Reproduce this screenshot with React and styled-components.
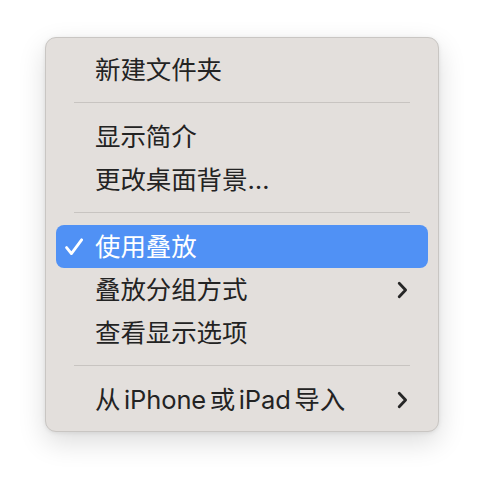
import styled, { createGlobalStyle } from 'styled-components'

const GlobalStyle = createGlobalStyle`
  html, body {
    margin: 0;
    padding: 0;
    background: #ffffff;
  }
  body {
    font-family: Inter, "Noto Sans CJK SC", sans-serif;
  }
`

const sections = [
  [{ label: '新建文件夹' }],
  [{ label: '显示简介' }, { label: '更改桌面背景…' }],
  [
    { label: '使用叠放', checked: true, active: true },
    { label: '叠放分组方式', submenu: true },
    { label: '查看显示选项' }
  ],
  [{ label: '从 iPhone 或 iPad 导入', submenu: true }]
]

function Check() {
  return (
    <svg width="18" height="18" viewBox="0 0 18 18" fill="none">
      <path
        d="M1.6 9.6 L6.4 15.6 L16.6 1.8"
        stroke="#fff"
        strokeWidth="2.8"
        strokeLinecap="round"
        strokeLinejoin="round"
      />
    </svg>
  )
}

function Chevron() {
  return (
    <svg width="11" height="18" viewBox="0 0 11 18" fill="none">
      <path
        d="M2.2 2.2 L8.6 9 L2.2 15.8"
        stroke="#262626"
        strokeWidth="2.8"
        strokeLinecap="round"
        strokeLinejoin="round"
      />
    </svg>
  )
}

export default function App() {
  return (
    <Page>
      <GlobalStyle />
      <Menu>
        {sections.map((items, i) => (
          <Section key={i}>
            {i > 0 && <Separator />}
            {items.map((item) => (
              <Row key={item.label} $active={item.active}>
                <CheckSlot>{item.checked && <Check />}</CheckSlot>
                <Label>{item.label}</Label>
                {item.submenu && <Chevron />}
              </Row>
            ))}
          </Section>
        ))}
      </Menu>
    </Page>
  )
}

const Page = styled.div`
  padding: 37px 0 0 45px;
  height: 486px;
  box-sizing: border-box;
`

const Menu = styled.div`
  width: 394px;
  box-sizing: border-box;
  background: #e3dfdc;
  border: 1px solid #c9c6c3;
  border-radius: 11px;
  padding: 10px 10px;
  box-shadow: 0 10px 28px rgba(0, 0, 0, 0.14), 0 1px 4px rgba(0, 0, 0, 0.08);
`

const Section = styled.div`
  display: flex;
  flex-direction: column;
`

const Separator = styled.div`
  height: 1px;
  background: #c8c4c1;
  margin: 11px 18px 12px 18px;
`

const Row = styled.div`
  display: flex;
  align-items: center;
  height: 43px;
  padding: 0 20px 0 9px;
  border-radius: 8px;
  background: ${(p) => (p.$active ? '#5091f5' : 'transparent')};
  color: ${(p) => (p.$active ? '#ffffff' : '#232323')};
`

const CheckSlot = styled.div`
  width: 30px;
  display: flex;
  align-items: center;
`

const Label = styled.span`
  flex: 1;
  font-size: 25.5px;
  line-height: 1;
  word-spacing: -3.5px;
  letter-spacing: -0.1px;
  white-space: nowrap;
`
